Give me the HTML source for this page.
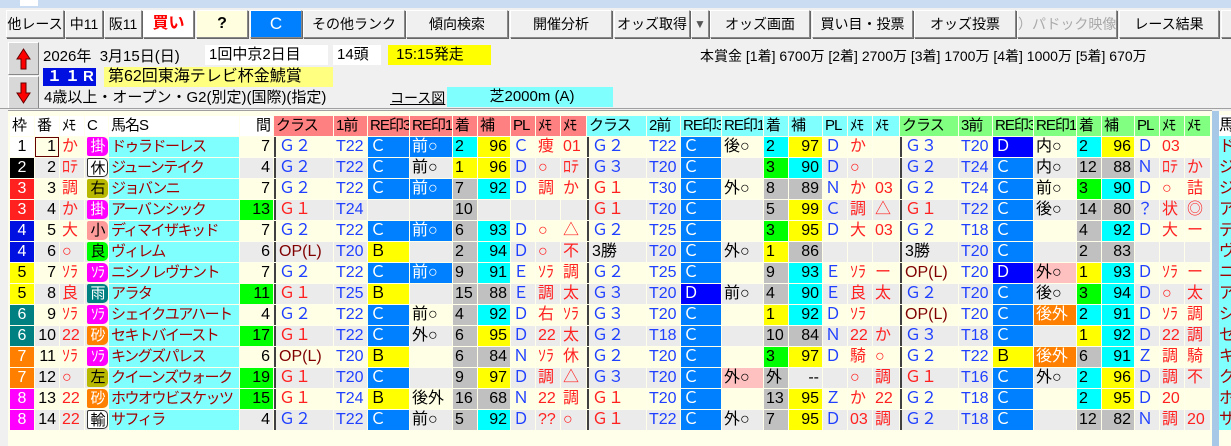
<!DOCTYPE html>
<html><head><meta charset="utf-8">
<style>
*{margin:0;padding:0;box-sizing:border-box}
body{width:1231px;height:446px;overflow:hidden;background:#f0f0f0;font-family:"Liberation Sans","Noto Sans CJK JP",sans-serif;font-size:15px;color:#000;position:relative}
.abs{position:absolute}
.title{left:0;top:0;width:1231px;height:8px;background:#c9dcf2}
.btn{position:absolute;top:10px;height:28px;background:#f0f0f0;border:1px solid #fff;border-right-color:#888;border-bottom-color:#888;box-shadow:1px 1px 0 #666;text-align:center;line-height:26px;font-size:14px;white-space:nowrap;overflow:hidden}
.info{font-size:14px;white-space:nowrap}
.box{position:absolute;height:20px;line-height:20px;font-size:15px;padding-left:4px;white-space:nowrap}
.arrow{position:absolute;left:8px;width:31px;height:33px;background:#d8d8d8;border:1px solid #fff;border-right-color:#888;border-bottom-color:#888}
.tblwrap{position:absolute;left:8px;top:110px;width:1204px;height:336px;background:#ffffea;border-top:1px solid #a0a0a0}
table{position:absolute;left:1px;top:4px;border-collapse:separate;border-spacing:1px;table-layout:fixed;width:1202px}
td{height:20px;padding:0 0 0 2px;line-height:20px;font-size:16px;white-space:nowrap;overflow:hidden;font-family:"Liberation Sans","Noto Sans CJK JP",sans-serif}
tr.h td{background:#fff;font-size:15px;letter-spacing:-1px}
tr.o td{background:#ffffe6}
tr.e td{background:#ebebeb}
td.hr{background:#ff8080!important}
td.hc{background:#80ffff!important}
td.hg{background:#80ff80!important}
td.nm{background:#80ffff!important;color:#a00000;font-size:15px;letter-spacing:-1.5px}
td.gr{background:#00ff00!important}
td.cb{background:#0080ff!important;color:#fff}
td.db{background:#0000ff!important;color:#fff}
td.yb{background:#ffff00!important}
td.cy{background:#00ffff!important}
td.gy{background:#c0c0c0!important}
td.pk{background:#ffc0c0!important}
td.og{background:#ff8000!important;color:#fff}
td.sep{box-shadow:inset 2px 0 0 #404040;padding-left:5px}
td.r{text-align:right;padding-right:3px}
.b{color:#2040ff}.rd{color:#ff2020}.br{color:#800000}
.w1{background:#fff!important}.w2{background:#000!important;color:#fff}.w3{background:#ff2020!important;color:#fff}.w4{background:#0010e0!important;color:#fff}.w5{background:#ffff00!important}.w6{background:#008080!important;color:#fff}.w7{background:#ff8000!important;color:#fff}.w8{background:#ff00ff!important;color:#fff}
td.wk{text-align:center;padding:0}
.bd{display:inline-block;width:21px;height:19px;line-height:19px;border-radius:2px 5px 5px 2px;font-size:15px;text-align:center;vertical-align:top;margin-top:0;letter-spacing:-1px}
.m{background:#ff00ff;color:#fff}.ol{background:#b8b800}.pn{background:#ff9a9a}.gn{background:#00ff00}.tl{background:#008080;color:#fff}.or{background:#ff8000;color:#fff}.wh{background:#fff;border:1px solid #333}
</style></head><body>
<div class="abs title"></div>
<div class="abs" style="left:20px;top:0;width:18px;height:6px;background:#fff"></div>
<div class="btn" style="left:6px;width:58px">他レース</div>
<div class="btn" style="left:65px;width:38px">中11</div>
<div class="btn" style="left:104px;width:38px">阪11</div>
<div class="btn" style="left:143px;width:51px;background:#fff;color:#ff0000;font-weight:bold;font-size:16px">買い</div>
<div class="btn" style="left:196px;width:52px;background:#ffffe0;font-weight:bold;font-size:16px">?</div>
<div class="btn" style="left:250px;width:52px;background:#0080ff;color:#fff;font-size:17px">C</div>
<div class="btn" style="left:303px;width:102px">その他ランク</div>
<div class="btn" style="left:406px;width:102px">傾向検索</div>
<div class="btn" style="left:510px;width:102px">開催分析</div>
<div class="btn" style="left:614px;width:76px">オッズ取得</div>
<div class="btn" style="left:691px;width:18px;color:#555;font-size:12px">▼</div>
<div class="btn" style="left:710px;width:100px">オッズ画面</div>
<div class="btn" style="left:812px;width:101px">買い目・投票</div>
<div class="btn" style="left:914px;width:102px">オッズ投票</div>
<div class="btn" style="left:1017px;width:100px;color:#aaa">）パドック映像</div>
<div class="btn" style="left:1119px;width:100px">レース結果</div>
<div class="btn" style="left:1221px;width:20px"></div>

<div class="arrow" style="top:42px"><svg width="29" height="31"><path d="M14.5 6 L21 16 L17 16 L17 26 L12 26 L12 16 L8 16 Z" fill="#ff0000" stroke="#600" stroke-width="1"/></svg></div>
<div class="arrow" style="top:76px"><svg width="29" height="31"><path d="M14.5 26 L21 16 L17 16 L17 6 L12 6 L12 16 L8 16 Z" fill="#ff0000" stroke="#600" stroke-width="1"/></svg></div>
<div class="abs info" style="left:43px;top:45px;font-size:15px">2026年&nbsp; 3月15日(日)</div>
<div class="box" style="left:205px;top:45px;width:123px;background:#fff">1回中京2日目</div>
<div class="box" style="left:333px;top:45px;width:48px;background:#fff">14頭</div>
<div class="box" style="left:388px;top:45px;width:103px;background:#ffff00">&nbsp;15:15発走</div>
<div class="box" style="left:43px;top:68px;width:53px;height:18px;line-height:18px;background:#0010e0;color:#fff;font-weight:bold;letter-spacing:3px">１１R</div>
<div class="box" style="left:104px;top:67px;width:229px;background:#ffff80;font-size:16px">第62回東海テレビ杯金鯱賞</div>
<div class="abs info" style="left:44px;top:86px;font-size:15px">4歳以上・オープン・G2(別定)(国際)(指定)</div>
<div class="abs info" style="left:390px;top:88px;text-decoration:underline">コース図</div>
<div class="box" style="left:447px;top:87px;width:166px;background:#80ffff;text-align:center">芝2000m (A)</div>
<div class="abs info" style="left:700px;top:46px;font-size:14px">本賞金 [1着] 6700万 [2着] 2700万 [3着] 1700万 [4着] 1000万 [5着] 670万</div>
<div class="abs" style="left:0;top:108px;width:1231px;height:1px;background:#a0a0a0"></div>

<div class="tblwrap">
<table>
<colgroup><col style="width:24px"><col style="width:24px"><col style="width:24px"><col style="width:23px"><col style="width:130px"><col style="width:33px"><col style="width:59px"><col style="width:33px"><col style="width:41px"><col style="width:42px"><col style="width:24px"><col style="width:32px"><col style="width:24px"><col style="width:24px"><col style="width:25px"><col style="width:59px"><col style="width:33px"><col style="width:40px"><col style="width:41px"><col style="width:24px"><col style="width:33px"><col style="width:24px"><col style="width:24px"><col style="width:26px"><col style="width:58px"><col style="width:33px"><col style="width:40px"><col style="width:42px"><col style="width:24px"><col style="width:32px"><col style="width:24px"><col style="width:24px"><col style="width:25px"></colgroup>
<tr class="h"><td>枠</td><td>番</td><td>ﾒﾓ</td><td>C</td><td>馬名S</td><td class="r">間</td><td class="hr">クラス</td><td class="hr">1前</td><td class="hr">RE印3</td><td class="hr">RE印1</td><td class="hr">着</td><td class="hr">補</td><td class="hr">PL</td><td class="hr">ﾒﾓ</td><td class="hr">ﾒﾓ</td><td class="hc">クラス</td><td class="hc">2前</td><td class="hc">RE印3</td><td class="hc">RE印1</td><td class="hc">着</td><td class="hc">補</td><td class="hc">PL</td><td class="hc">ﾒﾓ</td><td class="hc">ﾒﾓ</td><td class="hg">クラス</td><td class="hg">3前</td><td class="hg">RE印3</td><td class="hg">RE印1</td><td class="hg">着</td><td class="hg">補</td><td class="hg">PL</td><td class="hg">ﾒﾓ</td><td class="hg">ﾒﾓ</td></tr>

<tr class="o"><td class="wk w1">1</td><td class="r" style="box-shadow:inset 0 0 0 1px #600">1</td><td class="rd">か</td><td><span class="bd m">掛</span></td><td class="nm">ドゥラドーレス</td><td class="r">7</td><td class="sep b">Ｇ２</td><td class="b">T22</td><td class="cb">Ｃ</td><td class="cb">前○</td><td class="cy">2</td><td class="yb r">96</td><td class="b">Ｃ</td><td class="rd">痩</td><td class="rd">01</td><td class="sep b">Ｇ２</td><td class="b">T22</td><td class="cb">Ｃ</td><td>後○</td><td class="cy">2</td><td class="yb r">97</td><td class="b">Ｄ</td><td class="rd">か</td><td></td><td class="sep b">Ｇ３</td><td class="b">T20</td><td class="db">Ｄ</td><td>内○</td><td class="cy">2</td><td class="yb r">96</td><td class="b">Ｄ</td><td class="rd">03</td><td></td></tr>

<tr class="e"><td class="wk w2">2</td><td class="r">2</td><td class="rd">ﾛﾃ</td><td><span class="bd wh">休</span></td><td class="nm">ジューンテイク</td><td class="r">4</td><td class="sep b">Ｇ２</td><td class="b">T22</td><td class="cb">Ｃ</td><td>前○</td><td class="yb">1</td><td class="yb r">96</td><td class="b">Ｄ</td><td class="rd">○</td><td class="rd">ﾛﾃ</td><td class="sep b">Ｇ３</td><td class="b">T20</td><td class="cb">Ｃ</td><td></td><td class="gr">3</td><td class="cy r">90</td><td class="b">Ｄ</td><td class="rd">○</td><td></td><td class="sep b">Ｇ２</td><td class="b">T24</td><td class="cb">Ｃ</td><td>内○</td><td class="gy">12</td><td class="gy r">88</td><td class="b">Ｎ</td><td class="rd">ﾛﾃ</td><td class="rd">か</td></tr>

<tr class="o"><td class="wk w3">3</td><td class="r">3</td><td class="rd">調</td><td><span class="bd ol">右</span></td><td class="nm">ジョバンニ</td><td class="r">7</td><td class="sep b">Ｇ２</td><td class="b">T22</td><td class="cb">Ｃ</td><td class="cb">前○</td><td class="gy">7</td><td class="cy r">92</td><td class="b">Ｄ</td><td class="rd">調</td><td class="rd">か</td><td class="sep rd">Ｇ１</td><td class="b">T30</td><td class="cb">Ｃ</td><td>外○</td><td class="gy">8</td><td class="gy r">89</td><td class="b">Ｎ</td><td class="rd">か</td><td class="rd">03</td><td class="sep b">Ｇ２</td><td class="b">T24</td><td class="cb">Ｃ</td><td>前○</td><td class="gr">3</td><td class="cy r">90</td><td class="b">Ｄ</td><td class="rd">○</td><td class="rd">詰</td></tr>

<tr class="e"><td class="wk w3">3</td><td class="r">4</td><td class="rd">か</td><td><span class="bd m">掛</span></td><td class="nm">アーバンシック</td><td class="gr r">13</td><td class="sep rd">Ｇ１</td><td class="b">T24</td><td></td><td></td><td class="gy">10</td><td></td><td></td><td></td><td></td><td class="sep rd">Ｇ１</td><td class="b">T20</td><td class="cb">Ｃ</td><td></td><td class="gy">5</td><td class="yb r">99</td><td class="b">Ｃ</td><td class="rd">調</td><td class="rd">△</td><td class="sep rd">Ｇ１</td><td class="b">T22</td><td class="cb">Ｃ</td><td>後○</td><td class="gy">14</td><td class="gy r">80</td><td class="b">？</td><td class="rd">状</td><td class="rd">◎</td></tr>

<tr class="o"><td class="wk w4">4</td><td class="r">5</td><td class="rd">大</td><td><span class="bd pn">小</span></td><td class="nm">ディマイザキッド</td><td class="r">7</td><td class="sep b">Ｇ２</td><td class="b">T22</td><td class="cb">Ｃ</td><td class="cb">前○</td><td class="gy">6</td><td class="cy r">93</td><td class="b">Ｄ</td><td class="rd">○</td><td class="rd">△</td><td class="sep b">Ｇ２</td><td class="b">T25</td><td class="cb">Ｃ</td><td></td><td class="gr">3</td><td class="yb r">95</td><td class="b">Ｄ</td><td class="rd">大</td><td class="rd">03</td><td class="sep b">Ｇ２</td><td class="b">T18</td><td class="cb">Ｃ</td><td></td><td class="gy">4</td><td class="cy r">92</td><td class="b">Ｄ</td><td class="rd">大</td><td class="rd">ー</td></tr>

<tr class="e"><td class="wk w4">4</td><td class="r">6</td><td class="rd">○</td><td><span class="bd gn">良</span></td><td class="nm">ヴィレム</td><td class="r">6</td><td class="sep br">OP(L)</td><td class="b">T20</td><td class="yb">Ｂ</td><td></td><td class="gy">2</td><td class="cy r">94</td><td class="b">Ｄ</td><td class="rd">○</td><td class="rd">不</td><td class="sep">3勝</td><td class="b">T20</td><td class="cb">Ｃ</td><td>外○</td><td class="yb">1</td><td class="gy r">86</td><td></td><td></td><td></td><td class="sep">3勝</td><td class="b">T20</td><td class="cb">Ｃ</td><td></td><td class="gy">2</td><td class="gy r">83</td><td></td><td></td><td></td></tr>

<tr class="o"><td class="wk w5">5</td><td class="r">7</td><td class="rd">ｿﾗ</td><td><span class="bd m">ｿﾗ</span></td><td class="nm">ニシノレヴナント</td><td class="r">7</td><td class="sep b">Ｇ２</td><td class="b">T22</td><td class="cb">Ｃ</td><td class="cb">前○</td><td class="gy">9</td><td class="cy r">91</td><td class="b">Ｅ</td><td class="rd">ｿﾗ</td><td class="rd">調</td><td class="sep b">Ｇ２</td><td class="b">T25</td><td class="cb">Ｃ</td><td></td><td class="gy">9</td><td class="cy r">93</td><td class="b">Ｅ</td><td class="rd">ｿﾗ</td><td class="rd">ー</td><td class="sep br">OP(L)</td><td class="b">T20</td><td class="db">Ｄ</td><td class="pk">外○</td><td class="yb">1</td><td class="cy r">93</td><td class="b">Ｄ</td><td class="rd">ｿﾗ</td><td class="rd">ー</td></tr>

<tr class="e"><td class="wk w5">5</td><td class="r">8</td><td class="rd">良</td><td><span class="bd tl">雨</span></td><td class="nm">アラタ</td><td class="gr r">11</td><td class="sep rd">Ｇ１</td><td class="b">T25</td><td class="yb">Ｂ</td><td></td><td class="gy">15</td><td class="gy r">88</td><td class="b">Ｅ</td><td class="rd">調</td><td class="rd">太</td><td class="sep b">Ｇ３</td><td class="b">T20</td><td class="db">Ｄ</td><td>前○</td><td class="gy">4</td><td class="cy r">90</td><td class="b">Ｅ</td><td class="rd">良</td><td class="rd">太</td><td class="sep b">Ｇ２</td><td class="b">T20</td><td class="cb">Ｃ</td><td>後○</td><td class="gr">3</td><td class="cy r">94</td><td class="b">Ｄ</td><td class="rd">○</td><td class="rd">太</td></tr>

<tr class="o"><td class="wk w6">6</td><td class="r">9</td><td class="rd">ｿﾗ</td><td><span class="bd m">ｿﾗ</span></td><td class="nm">シェイクユアハート</td><td class="r">4</td><td class="sep b">Ｇ２</td><td class="b">T22</td><td class="cb">Ｃ</td><td>前○</td><td class="gy">4</td><td class="cy r">92</td><td class="b">Ｄ</td><td class="rd">右</td><td class="rd">ｿﾗ</td><td class="sep b">Ｇ３</td><td class="b">T20</td><td class="cb">Ｃ</td><td></td><td class="yb">1</td><td class="cy r">92</td><td class="b">Ｄ</td><td class="rd">ｿﾗ</td><td></td><td class="sep br">OP(L)</td><td class="b">T20</td><td class="cb">Ｃ</td><td class="og">後外</td><td class="cy">2</td><td class="cy r">91</td><td class="b">Ｄ</td><td class="rd">ｿﾗ</td><td class="rd">調</td></tr>

<tr class="e"><td class="wk w6">6</td><td class="r">10</td><td class="rd">22</td><td><span class="bd or">砂</span></td><td class="nm">セキトバイースト</td><td class="gr r">17</td><td class="sep rd">Ｇ１</td><td class="b">T22</td><td class="cb">Ｃ</td><td>外○</td><td class="gy">6</td><td class="yb r">95</td><td class="b">Ｄ</td><td class="rd">22</td><td class="rd">太</td><td class="sep b">Ｇ２</td><td class="b">T18</td><td class="cb">Ｃ</td><td></td><td class="gy">10</td><td class="gy r">84</td><td class="b">Ｎ</td><td class="rd">22</td><td class="rd">か</td><td class="sep b">Ｇ３</td><td class="b">T18</td><td class="cb">Ｃ</td><td></td><td class="yb">1</td><td class="cy r">92</td><td class="b">Ｄ</td><td class="rd">22</td><td class="rd">調</td></tr>

<tr class="o"><td class="wk w7">7</td><td class="r">11</td><td class="rd">ｿﾗ</td><td><span class="bd m">ｿﾗ</span></td><td class="nm">キングズパレス</td><td class="r">6</td><td class="sep br">OP(L)</td><td class="b">T20</td><td class="yb">Ｂ</td><td></td><td class="gy">6</td><td class="gy r">84</td><td class="b">Ｎ</td><td class="rd">ｿﾗ</td><td class="rd">休</td><td class="sep b">Ｇ２</td><td class="b">T20</td><td class="cb">Ｃ</td><td></td><td class="gr">3</td><td class="yb r">97</td><td class="b">Ｄ</td><td class="rd">騎</td><td class="rd">○</td><td class="sep b">Ｇ２</td><td class="b">T22</td><td class="yb">Ｂ</td><td class="og">後外</td><td class="gy">6</td><td class="cy r">91</td><td class="b">Ｚ</td><td class="rd">調</td><td class="rd">騎</td></tr>

<tr class="e"><td class="wk w7">7</td><td class="r">12</td><td class="rd">○</td><td><span class="bd ol">左</span></td><td class="nm">クイーンズウォーク</td><td class="gr r">19</td><td class="sep rd">Ｇ１</td><td class="b">T20</td><td class="cb">Ｃ</td><td></td><td class="gy">9</td><td class="yb r">97</td><td class="b">Ｄ</td><td class="rd">調</td><td class="rd">△</td><td class="sep b">Ｇ３</td><td class="b">T20</td><td class="cb">Ｃ</td><td class="pk">外○</td><td class="gy">外</td><td class="r">--</td><td></td><td class="rd">○</td><td class="rd">調</td><td class="sep rd">Ｇ１</td><td class="b">T16</td><td class="cb">Ｃ</td><td>外○</td><td class="cy">2</td><td class="yb r">96</td><td class="b">Ｄ</td><td class="rd">調</td><td class="rd">不</td></tr>

<tr class="o"><td class="wk w8">8</td><td class="r">13</td><td class="rd">22</td><td><span class="bd or">砂</span></td><td class="nm">ホウオウビスケッツ</td><td class="gr r">15</td><td class="sep rd">Ｇ１</td><td class="b">T24</td><td class="yb">Ｂ</td><td>後外</td><td class="gy">16</td><td class="gy r">68</td><td class="b">Ｎ</td><td class="rd">22</td><td class="rd">調</td><td class="sep rd">Ｇ１</td><td class="b">T20</td><td class="cb">Ｃ</td><td></td><td class="gy">13</td><td class="yb r">95</td><td class="b">Ｚ</td><td class="rd">か</td><td class="rd">22</td><td class="sep b">Ｇ２</td><td class="b">T18</td><td class="cb">Ｃ</td><td></td><td class="cy">2</td><td class="yb r">95</td><td class="b">Ｄ</td><td class="rd">20</td><td></td></tr>

<tr class="e"><td class="wk w8">8</td><td class="r">14</td><td class="rd">22</td><td><span class="bd wh">輸</span></td><td class="nm">サフィラ</td><td class="r">4</td><td class="sep b">Ｇ２</td><td class="b">T22</td><td class="cb">Ｃ</td><td>前○</td><td class="gy">5</td><td class="cy r">92</td><td class="b">Ｄ</td><td class="rd">??</td><td class="rd">○</td><td class="sep rd">Ｇ１</td><td class="b">T22</td><td class="cb">Ｃ</td><td>外○</td><td class="gy">7</td><td class="yb r">95</td><td class="b">Ｄ</td><td class="rd">03</td><td class="rd">調</td><td class="sep b">Ｇ２</td><td class="b">T18</td><td class="cb">Ｃ</td><td></td><td class="gy">12</td><td class="gy r">82</td><td class="b">Ｎ</td><td class="rd">調</td><td class="rd">20</td></tr>
</table>
</div>
<div class="abs" style="left:1212px;top:111px;width:7px;height:335px;background:#a8c8e8"></div>
<div class="abs" style="left:1219px;top:111px;width:12px;height:335px;background:#ffffea;overflow:hidden;font-size:16px;line-height:21px;color:#a00000">
<div style="background:#fff;color:#000;height:21px;margin-top:4px">馬</div>
<div style="background:#80ffff">ド<br>ジ<br>ジ<br>ア<br>デ<br>ヴ<br>ニ<br>ア<br>シ<br>セ<br>キ<br>ク<br>ホ<br>サ</div>
</div>
</body></html>
